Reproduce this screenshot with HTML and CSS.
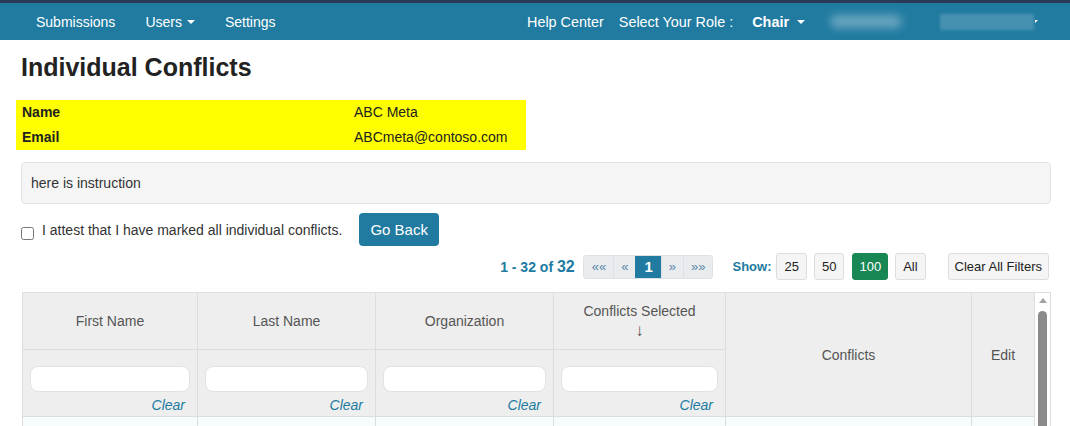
FILE: index.html
```html
<!DOCTYPE html>
<html lang="en">
<head>
<meta charset="utf-8">
<title>Individual Conflicts</title>
<link rel="stylesheet" href="styles.css">
</head>
<body>
<nav class="topbar">
  <ul class="nav-left">
    <li>Submissions</li>
    <li>Users<span class="caret"></span></li>
    <li>Settings</li>
  </ul>
  <div class="nav-right">
    <span class="help">Help Center</span>
    <span class="role-label">Select Your Role :</span>
    <span class="role">Chair<span class="caret caret-role"></span></span>
    <span class="blur blur-a"></span>
    <span class="blur blur-b"></span>
    <span class="caret caret-tiny"></span>
  </div>
</nav>

<main class="page">
  <h1 class="title">Individual Conflicts</h1>

  <table class="info">
    <tr><th>Name</th><td>ABC Meta</td></tr>
    <tr><th>Email</th><td>ABCmeta@contoso.com</td></tr>
  </table>

  <div class="instructions">here is instruction</div>

  <div class="attest">
    <input type="checkbox" class="attest-box" id="attest">
    <label for="attest" class="attest-label">I attest that I have marked all individual conflicts.</label>
    <button class="btn-back">Go Back</button>
  </div>

  <div class="toolbar">
    <span class="count">1 - 32 of <b>32</b></span>
    <div class="pager">
      <span>««</span><span>«</span><span class="current">1</span><span>»</span><span>»»</span>
    </div>
    <span class="show-label">Show:</span>
    <button class="size-btn first">25</button>
    <button class="size-btn">50</button>
    <button class="size-btn active">100</button>
    <button class="size-btn">All</button>
    <button class="size-btn clear-all">Clear All Filters</button>
  </div>

  <div class="grid-wrap">
    <table class="grid">
      <colgroup>
        <col class="c1"><col class="c2"><col class="c3"><col class="c4"><col class="c5"><col class="c6">
      </colgroup>
      <thead>
        <tr>
          <th>First Name</th>
          <th>Last Name</th>
          <th>Organization</th>
          <th>Conflicts Selected<br><span class="sort-arrow">↓</span></th>
          <th rowspan="2">Conflicts</th>
          <th rowspan="2">Edit</th>
        </tr>
        <tr>
          <th class="filter-cell"><input type="text"><a class="clear" href="#">Clear</a></th>
          <th class="filter-cell"><input type="text"><a class="clear" href="#">Clear</a></th>
          <th class="filter-cell"><input type="text"><a class="clear" href="#">Clear</a></th>
          <th class="filter-cell"><input type="text"><a class="clear" href="#">Clear</a></th>
        </tr>
      </thead>
      <tbody>
        <tr><td></td><td></td><td></td><td></td><td></td><td></td></tr>
        <tr><td></td><td></td><td></td><td></td><td></td><td></td></tr>
      </tbody>
    </table>
    <div class="rail">
      <span class="rail-arrow"></span>
      <span class="rail-thumb"></span>
    </div>
  </div>
</main>
</body>
</html>
```

FILE: styles.css
```css
html, body {
  overflow: hidden;
}
body {
  margin: 0;
  font-family: "Liberation Sans", Arial, sans-serif;
  font-size: 14px;
  color: #333;
  background: #fff;
}

/* ---------- top bar ---------- */
.topbar {
  display: flex;
  align-items: center;
  height: 37px;
  border-top: 3px solid #2a3a56;
  background: #217ba1;
  padding: 0 32px 0 21px;
  color: #fff;
}
.nav-left {
  display: flex;
  list-style: none;
  margin: 0;
  padding: 0;
}
.nav-left li {
  display: flex;
  align-items: center;
  padding: 0 15px;
}
.caret {
  display: inline-block;
  width: 0;
  height: 0;
  border-top: 4px solid #fff;
  border-left: 4px solid transparent;
  border-right: 4px solid transparent;
  margin-left: 5px;
}
.nav-right {
  margin-left: auto;
  display: flex;
  align-items: center;
  font-size: 14.4px;
}
.role-label {
  margin-left: 15px;
}
.role {
  display: flex;
  align-items: center;
  margin-left: 19px;
  font-weight: bold;
}
.caret-role {
  margin-left: 8px;
}
.blur {
  display: block;
}
.blur-a {
  width: 72px;
  height: 13px;
  margin-left: 25px;
  border-radius: 7px;
  background: rgba(255, 255, 255, 0.32);
  filter: blur(4px);
}
.blur-b {
  width: 94px;
  height: 16px;
  margin-left: 38px;
  background: rgba(255, 255, 255, 0.17);
  filter: blur(1.5px);
}
.caret-tiny {
  margin-left: 1px;
  border-top-width: 3px;
  border-left-width: 0;
  border-right-width: 3px;
}

/* ---------- page ---------- */
.page {
  padding: 0 19px 0 21px;
}
.title {
  font-size: 25px;
  line-height: 27px;
  margin: 14px 0 19px;
  color: #222;
  font-weight: bold;
}

.info {
  border-collapse: collapse;
  margin-left: -5px;
  width: 510px;
  background: #ffff00;
  color: #222;
}
.info th,
.info td {
  height: 25px;
  padding: 0 6px;
  line-height: 25px;
  text-align: left;
}
.info th {
  width: 320px;
  font-weight: bold;
}
.info td {
  font-weight: normal;
}

.instructions {
  margin-top: 12px;
  padding: 10px 9px;
  line-height: 20px;
  background: #f5f5f5;
  border: 1px solid #e3e3e3;
  border-radius: 4px;
  color: #333;
}

.attest {
  display: flex;
  align-items: center;
  margin-top: 9px;
}
.attest-box {
  width: 13px;
  height: 13px;
  margin: 8px 0 0 0;
}
.attest-label {
  margin-left: 8px;
  color: #333;
}
.btn-back {
  margin-left: 17px;
  padding: 6px 11px;
  font-family: inherit;
  font-size: 15px;
  line-height: 21px;
  background: #217ba1;
  color: #fff;
  border: 0;
  border-radius: 4px;
}

/* ---------- toolbar ---------- */
.toolbar {
  display: flex;
  justify-content: flex-end;
  align-items: center;
  margin-top: 7px;
  margin-right: 2px;
}
.count {
  color: #217ba1;
  font-weight: bold;
  font-size: 14px;
}
.count b {
  font-size: 16px;
}
.pager {
  display: flex;
  margin-left: 8px;
  height: 24px;
  border: 1px solid #dee2e6;
  border-radius: 3px;
  overflow: hidden;
  background: #e9ecef;
  box-sizing: border-box;
}
.pager span {
  padding: 0 7px;
  line-height: 22px;
  font-size: 13px;
  color: #5c87a8;
  border-left: 1px solid #dde1e5;
}
.pager span:first-child {
  border-left: 0;
  padding: 0 7px 0 8px;
}
.pager .current {
  background: #217ba1;
  color: #fff;
  font-weight: bold;
  font-size: 15px;
  padding: 0 8px;
  border-left-color: #217ba1;
}
.show-label {
  margin-left: 19px;
  font-weight: bold;
  color: #217ba1;
  font-size: 13px;
}
.size-btn {
  margin-left: 7px;
  height: 27px;
  padding: 0 7px;
  border: 1px solid #dddddd;
  border-radius: 3px;
  background: #f5f5f5;
  font-family: inherit;
  font-size: 13px;
  color: #222;
}
.size-btn.first {
  margin-left: 5px;
}
.size-btn.active {
  margin-left: 8px;
  padding: 0 6px;
  background: #198754;
  border-color: #198754;
  color: #fff;
}
.size-btn.clear-all {
  margin-left: 22px;
  padding: 0 6px;
}

/* ---------- grid ---------- */
.grid-wrap {
  display: flex;
  margin: 12px 0 0 1px;
  height: 133px;
  overflow: hidden;
  border: 1px solid #dddddd;
  border-bottom: 0;
}
.grid {
  width: 1012px;
  flex: none;
  table-layout: fixed;
  border-collapse: separate;
  border-spacing: 0;
  align-self: flex-start;
}
.c1 { width: 175px; }
.c2 { width: 178px; }
.c3 { width: 178px; }
.c4 { width: 172px; }
.c5 { width: 246px; }
.c6 { width: 63px; }

.grid th {
  background: #eeeeee;
  color: #555;
  font-weight: normal;
  line-height: 20px;
  padding: 8px 4px;
  text-align: center;
  vertical-align: middle;
  border-right: 1px solid #dddddd;
  border-bottom: 1px solid #dddddd;
}
.sort-arrow {
  font-size: 17px;
  line-height: 20px;
}
.grid th.filter-cell {
  padding: 16px 7px 1px;
}
.filter-cell input {
  display: block;
  width: 100%;
  height: 26px;
  box-sizing: border-box;
  border: 1px solid #e2e2e2;
  border-radius: 8px;
  background: #fff;
  outline: none;
}
.filter-cell .clear {
  display: block;
  margin-top: 3px;
  padding-right: 5px;
  text-align: right;
  font-style: italic;
  color: #217ba1;
  text-decoration: none;
  line-height: 20px;
}
.grid td {
  height: 36px;
  background: #f6fbfd;
  border-right: 1px solid #dddddd;
  border-bottom: 1px solid #dddddd;
}

/* scroll rail */
.rail {
  flex: 1;
  display: flex;
  flex-direction: column;
  align-items: center;
  background: #fff;
}
.rail-arrow {
  margin-top: 5px;
  width: 0;
  height: 0;
  border-bottom: 5px solid #a3a3a3;
  border-left: 4px solid transparent;
  border-right: 4px solid transparent;
}
.rail-thumb {
  margin-top: 8px;
  width: 9px;
  flex: 1;
  border-radius: 5px 5px 0 0;
  background: #8a8a8a;
}
```
